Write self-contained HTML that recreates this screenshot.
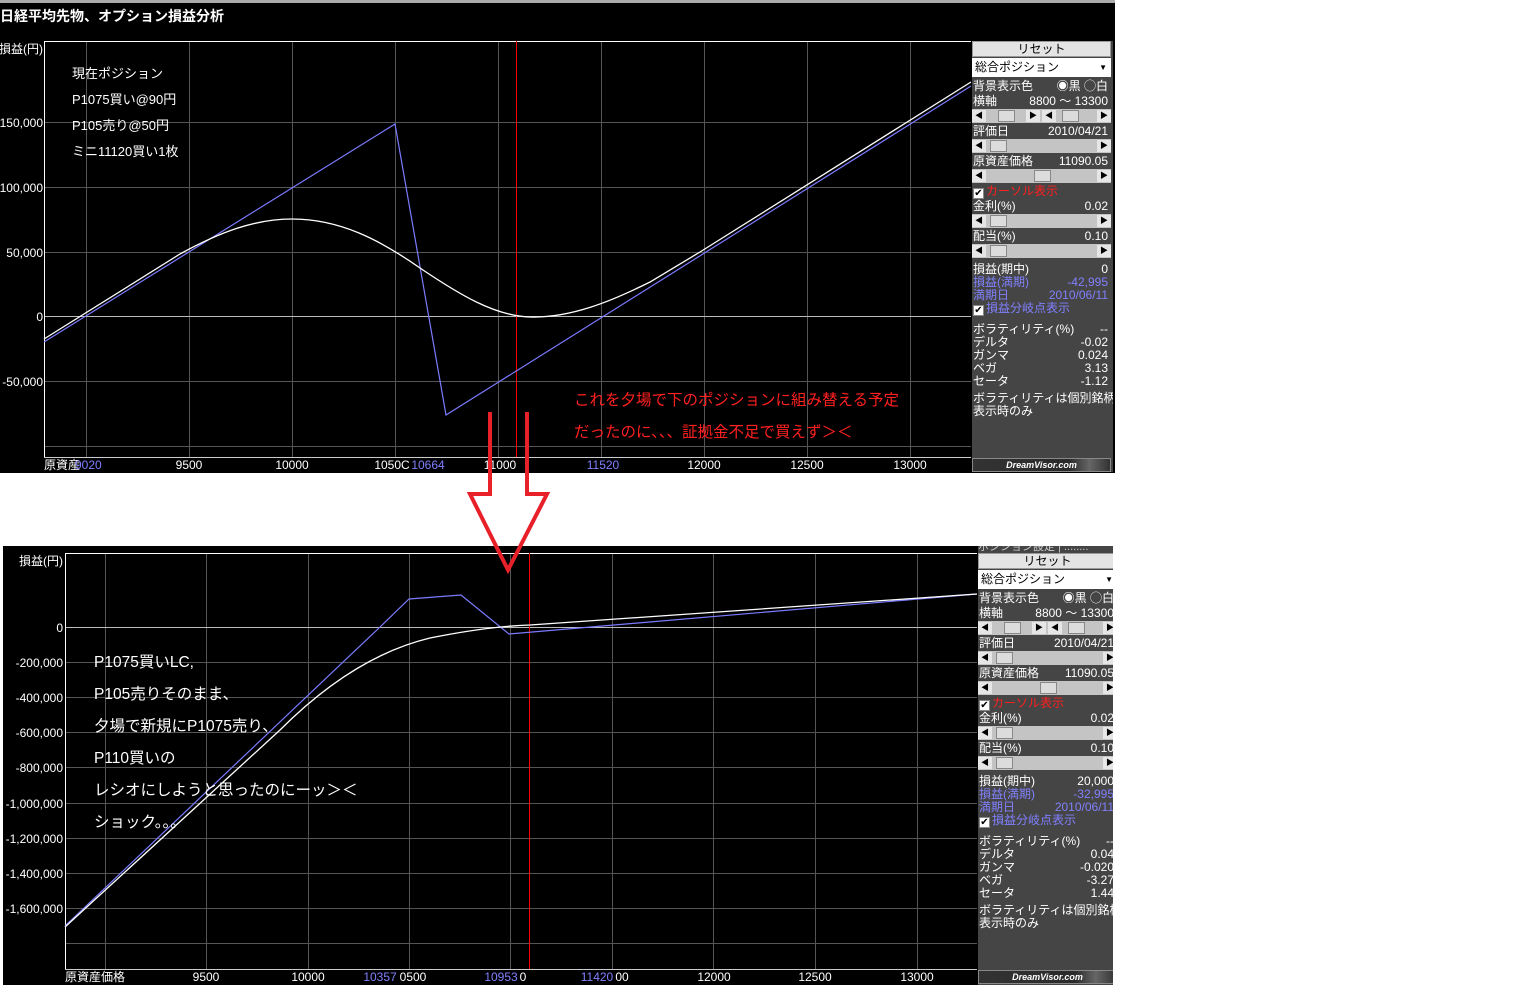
<!DOCTYPE html>
<html><head><meta charset="utf-8"><style>
*{margin:0;padding:0;box-sizing:border-box}
body{width:1536px;height:1002px;background:#fff;position:relative;overflow:hidden;font-family:"Liberation Sans","Noto Sans CJK JP",sans-serif}
.abs{position:absolute}
.panel{position:absolute;background:#454545;overflow:hidden;color:#fff;font-size:12px;line-height:14px}
.panel div{position:absolute;left:0;white-space:nowrap}
.btn{background:#e4e4e4;border:1px solid #999;color:#000;text-align:center;width:139px;height:16px;line-height:14px}
.dd{background:#fff;color:#000;width:139px;height:19px;line-height:19px;padding-left:3px}
.row{width:139px;height:14px;padding-left:1px}
.row span.v{position:absolute;right:3px;top:0}
.sb{width:139px;height:14px;background:#c4c4c4}
.sb i{position:absolute;top:1px;width:14px;height:12px;background:#e6e6e6;font-style:normal;color:#000;font-size:8px;line-height:12px;text-align:center}
.sb b{position:absolute;top:1px;width:17px;height:12px;background:#dcdcdc;border:1px solid #888}
.cb{display:inline-block;width:11px;height:11px;background:#fff;border:1px solid #888;color:#000;font-size:10px;line-height:9px;text-align:center;vertical-align:-1px;margin-right:2px}
.blue{color:#8080ff}
.dv{width:139px;height:14px;background:linear-gradient(90deg,#333 0%,#2a2a2a 70%,#666 85%,#333 100%);border:1px solid #888;color:#fff;font-size:9px;font-style:italic;font-weight:bold;text-align:center;line-height:12px}
</style></head><body>

<div class="abs" style="left:0;top:0;width:1115px;height:3px;background:#aaa"></div>
<div class="abs" style="left:0;top:3px;width:1115px;height:470px;background:#000"></div>
<div class="abs" style="left:0;top:6px;color:#fff;font-size:14px;font-weight:bold">日経平均先物、オプション損益分析</div>

<svg class="abs" style="left:0;top:0" width="1115" height="475" font-family="Liberation Sans, Noto Sans CJK JP, sans-serif">
 <g stroke="#555" stroke-width="1">
  <line x1="86.5" y1="41" x2="86.5" y2="457"/><line x1="189.5" y1="41" x2="189.5" y2="457"/><line x1="292.5" y1="41" x2="292.5" y2="457"/><line x1="395.5" y1="41" x2="395.5" y2="457"/><line x1="498.5" y1="41" x2="498.5" y2="457"/><line x1="601.5" y1="41" x2="601.5" y2="457"/><line x1="704.5" y1="41" x2="704.5" y2="457"/><line x1="807.5" y1="41" x2="807.5" y2="457"/><line x1="910.5" y1="41" x2="910.5" y2="457"/>
  <line x1="44" y1="122.5" x2="971" y2="122.5"/><line x1="44" y1="187.5" x2="971" y2="187.5"/><line x1="44" y1="252.5" x2="971" y2="252.5"/><line x1="44" y1="381.5" x2="971" y2="381.5"/><line x1="44" y1="446.5" x2="971" y2="446.5"/>
 </g>
 <line x1="44" y1="316.5" x2="971" y2="316.5" stroke="#bbb"/>
 <polyline points="44.5,457 44.5,41.5 971,41.5" fill="none" stroke="#fff"/>
 <line x1="44" y1="457.5" x2="971" y2="457.5" stroke="#ccc"/>
 <line x1="516.5" y1="41" x2="516.5" y2="457" stroke="#ff0000"/>
 <polyline points="44,342 395,124 446,415 971,86" fill="none" stroke="#7b7bff" stroke-width="1.2"/>
 <path d="M44,339 L180,254 C220,232 255,219 292,219 C340,219 380,240 420,268 C460,295 495,316 530,317 C570,318 610,302 650,282 L700,252 L971,82" fill="none" stroke="#fff" stroke-width="1.3"/>
 <g fill="#fff" font-size="12" text-anchor="end">
  <text x="43" y="53">損益(円)</text>
  <text x="43" y="127">150,000</text><text x="43" y="192">100,000</text><text x="43" y="257">50,000</text><text x="43" y="321">0</text><text x="43" y="386">-50,000</text>
 </g>
 <g fill="#fff" font-size="13">
  <text x="72" y="78">現在ポジション</text><text x="72" y="104">P1075買い@90円</text><text x="72" y="130">P105売り@50円</text><text x="72" y="156">ミニ11120買い1枚</text>
 </g>
 <g fill="#ff2020" font-size="15.5">
  <text x="574" y="405">これを夕場で下のポジションに組み替える予定</text>
  <text x="574" y="437">だったのに、、、証拠金不足で買えず＞＜</text>
 </g>
 <g fill="#fff" font-size="12" text-anchor="middle">
  <text x="44" y="469" text-anchor="start">原資産</text><text x="75" y="469" text-anchor="start" fill="#8080ff">9020</text>
  <text x="189" y="469">9500</text><text x="392" y="469">1050C</text><text x="292" y="469">10000</text><text x="428" y="469" fill="#8080ff">10664</text>
  <text x="500" y="469">11000</text><text x="603" y="469" fill="#8080ff">11520</text><text x="704" y="469">12000</text><text x="807" y="469">12500</text><text x="910" y="469">13000</text>
 </g>
</svg>

<div class="abs" style="left:3px;top:546px;width:1110px;height:439px;background:#000"></div>
<svg class="abs" style="left:0;top:540px" width="1115" height="450" font-family="Liberation Sans, Noto Sans CJK JP, sans-serif">
 <g transform="translate(0,-540)">
 <g stroke="#555" stroke-width="1">
  <line x1="105.5" y1="553" x2="105.5" y2="969"/><line x1="206.5" y1="553" x2="206.5" y2="969"/><line x1="308.5" y1="553" x2="308.5" y2="969"/><line x1="409.5" y1="553" x2="409.5" y2="969"/><line x1="510.5" y1="553" x2="510.5" y2="969"/><line x1="612.5" y1="553" x2="612.5" y2="969"/><line x1="713.5" y1="553" x2="713.5" y2="969"/><line x1="815.5" y1="553" x2="815.5" y2="969"/><line x1="917.5" y1="553" x2="917.5" y2="969"/>
  <line x1="65" y1="662.5" x2="977" y2="662.5"/><line x1="65" y1="697.5" x2="977" y2="697.5"/><line x1="65" y1="732.5" x2="977" y2="732.5"/><line x1="65" y1="767.5" x2="977" y2="767.5"/><line x1="65" y1="803.5" x2="977" y2="803.5"/><line x1="65" y1="838.5" x2="977" y2="838.5"/><line x1="65" y1="873.5" x2="977" y2="873.5"/><line x1="65" y1="908.5" x2="977" y2="908.5"/><line x1="65" y1="943.5" x2="977" y2="943.5"/>
 </g>
 <line x1="65" y1="627.5" x2="977" y2="627.5" stroke="#bbb"/>
 <polyline points="65.5,969 65.5,553.5 977,553.5" fill="none" stroke="#fff"/>
 <line x1="65" y1="969.5" x2="977" y2="969.5" stroke="#ccc"/>
 <line x1="529.5" y1="553" x2="529.5" y2="969" stroke="#ff0000"/>
 <polyline points="65,926 380,627 409,599 461,595 509,634 977,594" fill="none" stroke="#7b7bff" stroke-width="1.2"/>
 <path d="M65,927 L280,730 C330,680 380,650 430,638 C470,630 500,626 530,625 L977,594" fill="none" stroke="#fff" stroke-width="1.3"/>
 <g fill="#fff" font-size="12" text-anchor="end">
  <text x="63" y="565">損益(円)</text>
  <text x="63" y="632">0</text><text x="63" y="667">-200,000</text><text x="63" y="702">-400,000</text><text x="63" y="737">-600,000</text><text x="63" y="772">-800,000</text><text x="63" y="808">-1,000,000</text><text x="63" y="843">-1,200,000</text><text x="63" y="878">-1,400,000</text><text x="63" y="913">-1,600,000</text>
 </g>
 <g fill="#fff" font-size="15.5">
  <text x="94" y="667">P1075買いLC,</text><text x="94" y="699">P105売りそのまま、</text><text x="94" y="731">夕場で新規にP1075売り、</text><text x="94" y="763">P110買いの</text><text x="94" y="795">レシオにしようと思ったのにーッ＞＜</text><text x="94" y="827">ショック。。。</text>
 </g>
 <g fill="#fff" font-size="12" text-anchor="middle">
  <text x="65" y="981" text-anchor="start">原資産価格</text>
  <text x="206" y="981">9500</text><text x="308" y="981">10000</text><text x="380" y="981" fill="#8080ff">10357</text><text x="413" y="981">0500</text>
  <text x="501" y="981" fill="#8080ff">10953</text><text x="523" y="981">0</text><text x="597" y="981" fill="#8080ff">11420</text><text x="622" y="981">00</text>
  <text x="714" y="981">12000</text><text x="815" y="981">12500</text><text x="917" y="981">13000</text>
 </g>
 </g>
</svg>

<svg class="abs" style="left:0;top:0" width="1536" height="1002">
 <polyline points="490,412 490,494 470,494 508,570 547,494 527,494 527,412" fill="none" stroke="#e8202a" stroke-width="4" stroke-linejoin="miter"/>
</svg>

<div class="panel" style="left:972px;top:41px;width:141px;height:431px">
 <div class="btn" style="top:0">リセット</div>
 <div class="dd" style="top:17px">総合ポジション<span style="position:absolute;right:4px;font-size:8px">▼</span></div>
 <div class="row" style="top:38px">背景表示色 <span class="v">◉黒 ◯白</span></div>
 <div class="row" style="top:53px">横軸<span class="v">8800 ～ 13300</span></div>
 <div class="sb" style="top:68px"><i style="left:0">◀</i><b style="left:26px"></b><i style="left:54px">▶</i><i style="left:70px">◀</i><b style="left:90px"></b><i style="left:125px">▶</i></div>
 <div class="row" style="top:83px">評価日<span class="v">2010/04/21</span></div>
 <div class="sb" style="top:98px"><i style="left:0">◀</i><b style="left:18px"></b><i style="left:125px">▶</i></div>
 <div class="row" style="top:113px">原資産価格<span class="v">11090.05</span></div>
 <div class="sb" style="top:128px"><i style="left:0">◀</i><b style="left:62px"></b><i style="left:125px">▶</i></div>
 <div class="row" style="top:143px;color:#ff2020"><span class="cb">✔</span>カーソル表示</div>
 <div class="row" style="top:158px">金利(%)<span class="v">0.02</span></div>
 <div class="sb" style="top:173px"><i style="left:0">◀</i><b style="left:18px"></b><i style="left:125px">▶</i></div>
 <div class="row" style="top:188px">配当(%)<span class="v">0.10</span></div>
 <div class="sb" style="top:203px"><i style="left:0">◀</i><b style="left:18px"></b><i style="left:125px">▶</i></div>
 <div class="row" style="top:221px">損益(期中)<span class="v">0</span></div>
 <div class="row blue" style="top:234px">損益(満期)<span class="v">-42,995</span></div>
 <div class="row blue" style="top:247px">満期日<span class="v">2010/06/11</span></div>
 <div class="row blue" style="top:260px"><span class="cb">✔</span>損益分岐点表示</div>
 <div class="row" style="top:281px">ボラティリティ(%)<span class="v">--</span></div>
 <div class="row" style="top:294px">デルタ<span class="v">-0.02</span></div>
 <div class="row" style="top:307px">ガンマ<span class="v">0.024</span></div>
 <div class="row" style="top:320px">ベガ<span class="v">3.13</span></div>
 <div class="row" style="top:333px">セータ<span class="v">-1.12</span></div>
 <div class="row" style="top:350px">ボラティリティは個別銘柄</div>
 <div class="row" style="top:363px">表示時のみ</div>
 <div class="dv" style="top:417px">DreamVisor.com</div>
</div>

<div class="panel" style="left:978px;top:546px;width:135px;height:439px">
 <div style="top:-6px;font-size:11px;color:#ccc">ポジション設定 | ........</div>
 <div class="btn" style="top:7px">リセット</div>
 <div class="dd" style="top:24px">総合ポジション<span style="position:absolute;right:4px;font-size:8px">▼</span></div>
 <div class="row" style="top:45px">背景表示色 <span class="v">◉黒 ◯白</span></div>
 <div class="row" style="top:60px">横軸<span class="v">8800 ～ 13300</span></div>
 <div class="sb" style="top:75px"><i style="left:0">◀</i><b style="left:26px"></b><i style="left:54px">▶</i><i style="left:70px">◀</i><b style="left:90px"></b><i style="left:125px">▶</i></div>
 <div class="row" style="top:90px">評価日<span class="v">2010/04/21</span></div>
 <div class="sb" style="top:105px"><i style="left:0">◀</i><b style="left:18px"></b><i style="left:125px">▶</i></div>
 <div class="row" style="top:120px">原資産価格<span class="v">11090.05</span></div>
 <div class="sb" style="top:135px"><i style="left:0">◀</i><b style="left:62px"></b><i style="left:125px">▶</i></div>
 <div class="row" style="top:150px;color:#ff2020"><span class="cb">✔</span>カーソル表示</div>
 <div class="row" style="top:165px">金利(%)<span class="v">0.02</span></div>
 <div class="sb" style="top:180px"><i style="left:0">◀</i><b style="left:18px"></b><i style="left:125px">▶</i></div>
 <div class="row" style="top:195px">配当(%)<span class="v">0.10</span></div>
 <div class="sb" style="top:210px"><i style="left:0">◀</i><b style="left:18px"></b><i style="left:125px">▶</i></div>
 <div class="row" style="top:228px">損益(期中)<span class="v">20,000</span></div>
 <div class="row blue" style="top:241px">損益(満期)<span class="v">-32,995</span></div>
 <div class="row blue" style="top:254px">満期日<span class="v">2010/06/11</span></div>
 <div class="row blue" style="top:267px"><span class="cb">✔</span>損益分岐点表示</div>
 <div class="row" style="top:288px">ボラティリティ(%)<span class="v">--</span></div>
 <div class="row" style="top:301px">デルタ<span class="v">0.04</span></div>
 <div class="row" style="top:314px">ガンマ<span class="v">-0.020</span></div>
 <div class="row" style="top:327px">ベガ<span class="v">-3.27</span></div>
 <div class="row" style="top:340px">セータ<span class="v">1.44</span></div>
 <div class="row" style="top:357px">ボラティリティは個別銘柄</div>
 <div class="row" style="top:370px">表示時のみ</div>
 <div class="dv" style="top:424px">DreamVisor.com</div>
</div>
</body></html>
